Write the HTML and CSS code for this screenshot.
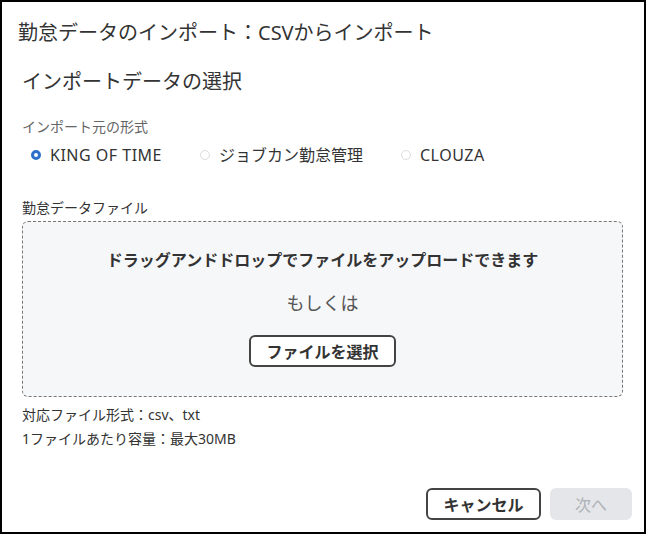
FILE: index.html
```html
<!doctype html>
<html>

<head>
    <title>勤怠データのインポート</title>
    <meta charset="UTF-8">
    <link rel="stylesheet" href="styles.css">
</head>

<body>
    <div class="dialog">
        <h1 class="title">勤怠データのインポート：CSVからインポート</h1>
        <h2 class="section-title">インポートデータの選択</h2>

        <p class="field-label">インポート元の形式</p>
        <div class="radios">
            <label class="radio checked"><span class="dot"></span><span class="en">KING OF TIME</span></label>
            <label class="radio"><span class="dot"></span>ジョブカン勤怠管理</label>
            <label class="radio"><span class="dot"></span><span class="en">CLOUZA</span></label>
        </div>

        <p class="file-label">勤怠データファイル</p>
        <div class="dropzone">
            <p class="drop-text">ドラッグアンドドロップでファイルをアップロードできます</p>
            <p class="or">もしくは</p>
            <button class="btn select-btn">ファイルを選択</button>
        </div>

        <div class="notes">
            <p>対応ファイル形式：csv、txt</p>
            <p>1ファイルあたり容量：最大30MB</p>
        </div>

        <div class="footer">
            <button class="btn cancel-btn">キャンセル</button>
            <button class="btn next-btn" disabled>次へ</button>
        </div>
    </div>
</body>

</html>
```

FILE: styles.css
```css
body {
    margin: 0;
    font-family: "Noto Sans", "Noto Sans CJK JP", sans-serif;
    color: #333;
}

p {
    margin: 0;
}

.dialog {
    box-sizing: border-box;
    width: 646px;
    height: 534px;
    border: 2px solid #000;
    padding: 0 21px 0 20px;
    background: #fff;
}

.title {
    margin: 0 0 0 -4px;
    padding-top: 19px;
    font-size: 20px;
    font-weight: normal;
    line-height: 24px;
}

.section-title {
    margin: 25px 0 0 0;
    font-size: 20px;
    font-weight: normal;
    line-height: 24px;
}

.field-label {
    margin-top: 24px;
    font-size: 14px;
    line-height: 18px;
    color: #666;
}

.radios {
    display: flex;
    margin-top: 7px;
    padding-left: 9px;
    height: 24px;
    align-items: center;
}

.radio {
    display: flex;
    align-items: center;
    gap: 9px;
    font-size: 16px;
    line-height: 24px;
}

.radio + .radio {
    margin-left: 38px;
}

.en {
    letter-spacing: 0.5px;
}

.dot {
    box-sizing: border-box;
    width: 10px;
    height: 10px;
    border-radius: 50%;
    border: 1px solid #ddd;
}

.checked .dot {
    border: 3px solid #2d72c8;
}

.file-label {
    margin-top: 32px;
    font-size: 14px;
    line-height: 18px;
}

.dropzone {
    box-sizing: border-box;
    margin-top: 4px;
    height: 176px;
    border: 1px dashed #777;
    border-radius: 6px;
    background: #f6f7f9;
    text-align: center;
    padding-top: 27px;
}

.drop-text {
    font-size: 16px;
    font-weight: bold;
    line-height: 22px;
}

.or {
    margin-top: 21px;
    font-size: 18px;
    line-height: 22px;
    color: #555;
}

.btn {
    box-sizing: border-box;
    height: 32px;
    font-family: inherit;
    font-size: 16px;
    font-weight: bold;
    color: #333;
    background: #fff;
    border: 2px solid #444;
    border-radius: 6px;
    padding: 0;
}

.select-btn {
    margin-top: 21px;
    width: 147px;
}

.notes {
    margin-top: 6px;
    font-size: 14px;
    line-height: 24px;
}

.footer {
    display: flex;
    justify-content: flex-end;
    gap: 9px;
    margin: 37px -9px 0 0;
}

.cancel-btn {
    width: 115px;
}

.next-btn {
    width: 82px;
    background: #e4e6e9;
    border-color: #e4e6e9;
    color: #aeb1b6;
    font-weight: normal;
}
```
